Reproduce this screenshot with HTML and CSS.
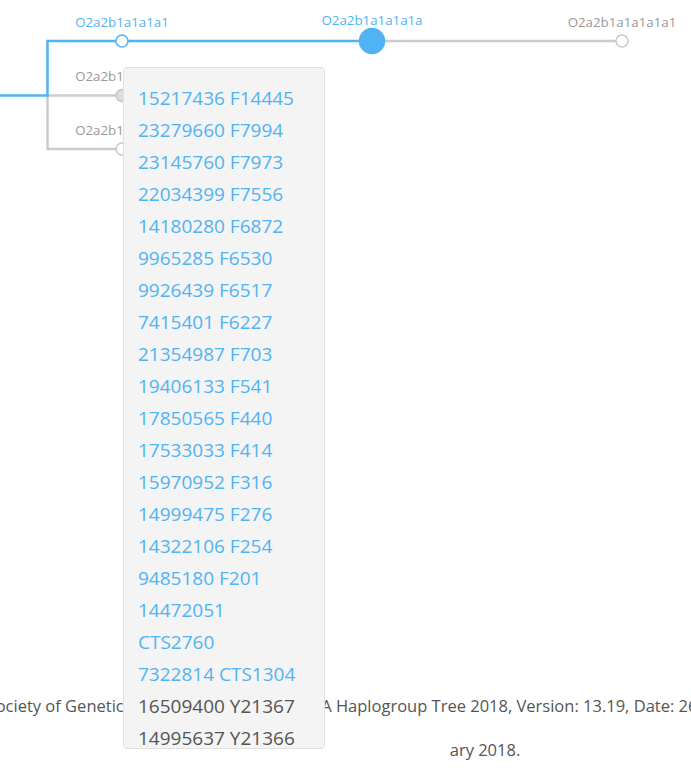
FILE: index.html
```html
<!DOCTYPE html>
<html lang="en">
<head>
    <meta charset="UTF-8">
    <title>Y-DNA Haplogroup Tree</title>
    <link rel="stylesheet" href="styles.css">
</head>
<body>
    <div class="page">
        <div class="chart">
            <svg class="tree" width="691" height="170" viewBox="0 0 691 170">
                <!-- links -->
                <path class="link gray" d="M47.5 95.5 V149 H122"/>
                <path class="link gray" d="M47.5 95.5 H122"/>
                <path class="link gray" d="M372 41 H622"/>
                <path class="link blue" d="M0 95.5 H47.5 V41 H372"/>

                <!-- nodes -->
                <circle class="node open-blue" cx="122" cy="41" r="6"/>
                <circle class="node active" cx="372" cy="41" r="12.5"/>
                <circle class="node open-gray" cx="622" cy="41" r="6"/>
                <circle class="node filled-gray" cx="122" cy="95.5" r="6"/>
                <circle class="node open-gray" cx="122" cy="149" r="6"/>

                <!-- labels -->
                <text class="label blue-text" x="122" y="27">O2a2b1a1a1a1</text>
                <text class="label blue-text" x="372" y="25">O2a2b1a1a1a1a</text>
                <text class="label gray-text" x="622" y="27">O2a2b1a1a1a1a1</text>
                <text class="label gray-text" x="122" y="81">O2a2b1a1a1a2</text>
                <text class="label gray-text" x="122" y="135">O2a2b1a1a1a3</text>
            </svg>
        </div>

        <p class="footer">
            <span class="footer-line first">International Society of Genetic Genealogy (ISOGG). Y-DNA Haplogroup Tree 2018, Version: 13.19, Date: 26 January 2018, http://www.isogg.org/tree/ Accessed 2 Febru</span>
            <span class="footer-line">ary 2018.</span>
        </p>

        <div class="tooltip">
            <ul class="snp-list">
                <li>15217436 F14445</li>
                <li>23279660 F7994</li>
                <li>23145760 F7973</li>
                <li>22034399 F7556</li>
                <li>14180280 F6872</li>
                <li>9965285 F6530</li>
                <li>9926439 F6517</li>
                <li>7415401 F6227</li>
                <li>21354987 F703</li>
                <li>19406133 F541</li>
                <li>17850565 F440</li>
                <li>17533033 F414</li>
                <li>15970952 F316</li>
                <li>14999475 F276</li>
                <li>14322106 F254</li>
                <li>9485180 F201</li>
                <li>14472051</li>
                <li>CTS2760</li>
                <li>7322814 CTS1304</li>
                <li class="muted">16509400 Y21367</li>
                <li class="muted">14995637 Y21366</li>
                <li class="muted">22183944 Y21365</li>
            </ul>
        </div>
    </div>
</body>
</html>
```

FILE: styles.css
```css
body {
    margin: 0;
    font-family: 'Open Sans', 'Noto Sans CJK SC', sans-serif;
    background-color: #fff;
    color: #555;
    overflow: hidden;
}
.page {
    position: relative;
    width: 691px;
    height: 776px;
    overflow: hidden;
}
.chart {
    height: 684px;
}
.tree {
    display: block;
}
.link {
    fill: none;
    stroke-width: 2.5;
}
.link.blue {
    stroke: #4fb3f6;
}
.link.gray {
    stroke: #ccc;
}
.node {
    stroke-width: 1.5;
}
.open-blue {
    fill: #fff;
    stroke: #4fb3f6;
}
.active {
    fill: #4fb3f6;
    stroke: #4fb3f6;
}
.open-gray {
    fill: #fff;
    stroke: #c8c8c8;
}
.filled-gray {
    fill: #ddd;
    stroke: #c8c8c8;
}
.label {
    font-family: 'Open Sans', sans-serif;
    font-size: 13.3px;
    text-anchor: middle;
}
.blue-text {
    fill: #4fb3f6;
}
.gray-text {
    fill: #999;
}
.footer {
    margin: 0;
    width: 970px;
    font-size: 16.5px;
    line-height: 44px;
    text-align: center;
    color: #555;
}
.footer-line {
    display: block;
    white-space: nowrap;
}
.footer-line.first {
    margin-left: -117px;
    text-align: left;
}
.tooltip {
    position: absolute;
    left: 123px;
    top: 67px;
    width: 200px;
    height: 680px;
    background-color: #f4f4f4;
    border: 1px solid #e2e2e2;
    border-radius: 4px;
    overflow: hidden;
}
.snp-list {
    list-style: none;
    margin: 0;
    padding: 14px 14px;
}
.snp-list li {
    font-size: 19px;
    line-height: 32px;
    color: #4fb3f6;
    white-space: nowrap;
}
.snp-list li.muted {
    color: #555;
}
```
